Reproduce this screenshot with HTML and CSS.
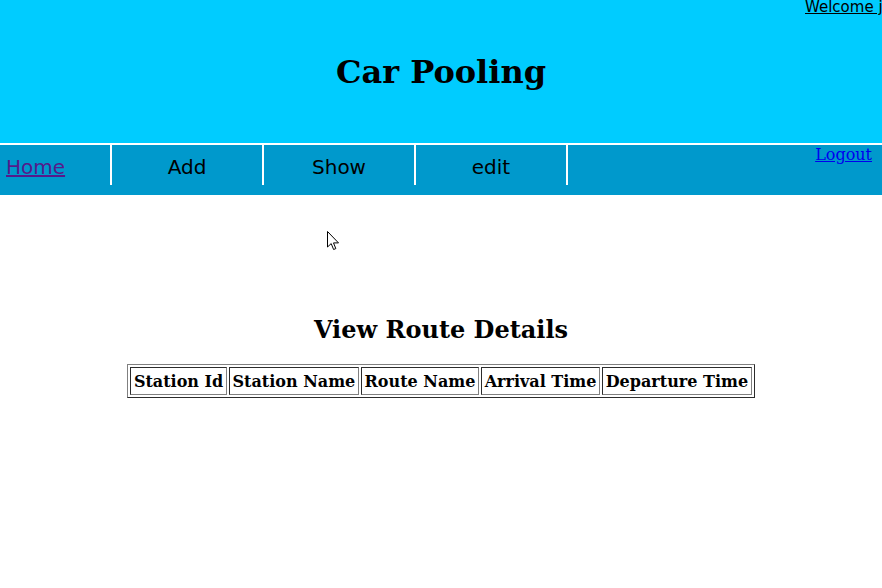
FILE: index.html
```html
<!DOCTYPE html>
<html>
<head>
<meta charset="utf-8">
<title>Car Pooling</title>
<link rel="stylesheet" href="styles.css">
</head>
<body>
<div class="header">
  <a class="welcome" href="#">Welcome john</a>
  <h1 class="title">Car Pooling</h1>
</div>
<div class="nav">
  <ul class="menu">
    <li class="item item-home"><a class="home-link" href="#">Home</a></li>
    <li class="item">Add</li>
    <li class="item">Show</li>
    <li class="item">edit</li>
  </ul>
  <a class="logout" href="#">Logout</a>
</div>
<div class="main">
  <h2 class="heading">View Route Details</h2>
  <table class="routes">
    <tr>
      <th class="cell">Station Id</th>
      <th class="cell">Station Name</th>
      <th class="cell">Route Name</th>
      <th class="cell">Arrival Time</th>
      <th class="cell">Departure Time</th>
    </tr>
  </table>
</div>
<svg class="cursor" width="13" height="20" viewBox="0 0 13 20">
  <path d="M0.5 0.5 L0.5 16 L4.2 12.6 L6.6 18.5 L8.8 17.6 L6.5 11.9 L11.5 11.9 Z" fill="#fff" stroke="#000" stroke-width="1" stroke-linejoin="miter"/>
</svg>
</body>
</html>
```
FILE: styles.css
```css
html, body {
  margin: 0;
  padding: 0;
  background: #fff;
  font-family: "DejaVu Serif", serif;
  overflow: hidden;
}
.header {
  position: relative;
  height: 143px;
  background: #00ccff;
  display: flex;
  align-items: center;
  justify-content: center;
  overflow: hidden;
}
.welcome {
  position: absolute;
  top: -2px;
  left: 805px;
  white-space: nowrap;
  font-family: "DejaVu Sans", sans-serif;
  font-size: 15px;
  color: #000;
}
.title {
  margin: 0;
  font-size: 32px;
  font-weight: bold;
}
.nav {
  margin-top: 2px;
  height: 50px;
  background: #0099cc;
  display: flex;
  justify-content: space-between;
  align-items: flex-start;
}
.menu {
  list-style: none;
  margin: 0;
  padding: 0;
  display: flex;
}
.item {
  width: 150px;
  height: 36px;
  padding-top: 4px;
  line-height: 36px;
  text-align: center;
  border-right: 2px solid #fff;
  font-family: "DejaVu Sans", sans-serif;
  font-size: 20px;
  color: #000;
}
.item-home {
  width: 104px;
  padding-left: 6px;
  text-align: left;
}
.home-link {
  color: #551a8b;
}
.logout {
  margin-right: 10px;
  font-size: 16px;
  color: #0000ee;
  line-height: 19px;
}
.main {
  padding-top: 120px;
  text-align: center;
}
.heading {
  margin: 0 0 20px 0;
  font-size: 24px;
  font-weight: bold;
}
.routes {
  margin: 0 auto;
  border: 1px outset #808080;
  border-spacing: 2px;
}
.cell {
  border: 1px inset #808080;
  padding: 4px 2.65px 3px;
  font-size: 16px;
  font-weight: bold;
}
.cursor {
  position: absolute;
  left: 327px;
  top: 231px;
}
```
